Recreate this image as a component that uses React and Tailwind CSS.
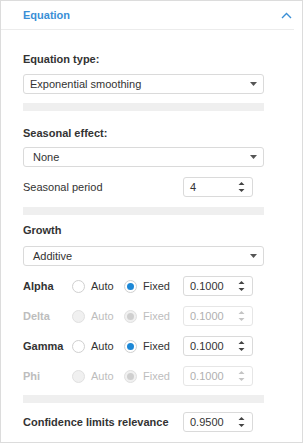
const font = { fontFamily: '"Liberation Sans", Arial, sans-serif' };

function Caret() {
  return (
    <svg width="7" height="4" viewBox="0 0 7 4" className="shrink-0">
      <path d="M0 0H7L3.5 4Z" fill="#555" />
    </svg>
  );
}

function Spin({ disabled }) {
  const c = disabled ? "#c4c4c4" : "#444";
  return (
    <svg width="7" height="12" viewBox="0 0 7 12" className="shrink-0">
      <path d="M0.5 4H6.5L3.5 1Z" fill={c} />
      <path d="M0.5 8H6.5L3.5 11Z" fill={c} />
    </svg>
  );
}

function Select({ value, pad = "pl-[9px]" }) {
  return (
    <div
      className={`flex h-[20px] w-[241px] items-center justify-between rounded-[3px] border border-[#dadada] bg-white ${pad} pr-[6px] text-[11px] text-[#333]`}
    >
      <span>{value}</span>
      <Caret />
    </div>
  );
}

function NumInput({ value, disabled }) {
  return (
    <div
      className={`flex h-[20px] w-[70px] shrink-0 items-center justify-between rounded-[3px] border bg-white pl-[6px] pr-[7px] text-[11px] ${
        disabled ? "border-[#e6e6e6] text-[#b0b0b0]" : "border-[#dadada] text-[#333]"
      }`}
    >
      <span>{value}</span>
      <Spin disabled={disabled} />
    </div>
  );
}

function Radio({ checked, disabled }) {
  if (disabled) {
    return (
      <span className="flex h-[13px] w-[13px] shrink-0 items-center justify-center rounded-full border border-[#e0e0e0] bg-[#f0f0f0]">
        {checked && <span className="h-[7px] w-[7px] rounded-full bg-[#cfcfcf]" />}
      </span>
    );
  }
  return (
    <span className="flex h-[13px] w-[13px] shrink-0 items-center justify-center rounded-full border border-[#d0d0d0] bg-white">
      {checked && <span className="h-[7px] w-[7px] rounded-full bg-[#1e88d6]" />}
    </span>
  );
}

function ParamRow({ label, auto, disabled, className = "" }) {
  const txt = disabled ? "text-[#bdbdbd]" : "text-[#333]";
  return (
    <div className={`flex h-[20px] items-center ${className}`}>
      <span className={`w-[49px] shrink-0 text-[11px] font-bold ${txt}`}>{label}</span>
      <div className="flex w-[52px] shrink-0 items-center">
        <Radio checked={auto} disabled={disabled} />
        <span className={`ml-[6px] text-[11px] ${txt}`}>Auto</span>
      </div>
      <div className="flex w-[59px] shrink-0 items-center">
        <Radio checked={!auto} disabled={disabled} />
        <span className={`ml-[6px] text-[11px] ${txt}`}>Fixed</span>
      </div>
      <NumInput value="0.1000" disabled={disabled} />
    </div>
  );
}

function Bar({ className = "" }) {
  return <div className={`h-[8px] w-[241px] bg-[#efefef] ${className}`} />;
}

export default function App() {
  return (
    <div className="h-[443px] w-[305px] bg-white" style={font}>
      <div className="flex h-[443px] w-[303px] flex-col border border-[#dcdcdc]">
        {/* header */}
        <div className="mr-[8px] flex h-[29px] shrink-0 items-center justify-between border-b border-[#ececec] pl-[22px] pr-[2px]">
          <span className="text-[11px] font-bold text-[#3a8fd6]">Equation</span>
          <svg width="11" height="7" viewBox="0 0 11 7">
            <path d="M1 6L5.5 1.5L10 6" fill="none" stroke="#3a8fd6" strokeWidth="1.4" />
          </svg>
        </div>

        <div className="flex flex-col pl-[22px]">
          <div className="mt-[22px] text-[11px] font-bold leading-[14px] text-[#333]">Equation type:</div>
          <div className="mt-[8px]">
            <Select value="Exponential smoothing" pad="pl-[6px]" />
          </div>
          <Bar className="mt-[9px]" />

          <div className="mt-[15px] text-[11px] font-bold leading-[14px] text-[#333]">Seasonal effect:</div>
          <div className="mt-[7px]">
            <Select value="None" />
          </div>
          <div className="mt-[10px] flex h-[20px] items-center">
            <span className="w-[160px] shrink-0 text-[11px] text-[#333]">Seasonal period</span>
            <NumInput value="4" />
          </div>
          <Bar className="mt-[10px]" />

          <div className="mt-[8px] text-[11px] font-bold leading-[14px] text-[#333]">Growth</div>
          <div className="mt-[9px]">
            <Select value="Additive" />
          </div>

          <ParamRow label="Alpha" className="mt-[10px]" />
          <ParamRow label="Delta" disabled className="mt-[10px]" />
          <ParamRow label="Gamma" className="mt-[10px]" />
          <ParamRow label="Phi" disabled className="mt-[10px]" />

          <Bar className="mt-[9px]" />
          <div className="mt-[9px] flex h-[20px] items-center">
            <span className="w-[160px] shrink-0 text-[11px] font-bold text-[#333]">Confidence limits relevance</span>
            <NumInput value="0.9500" />
          </div>
        </div>
      </div>
    </div>
  );
}
